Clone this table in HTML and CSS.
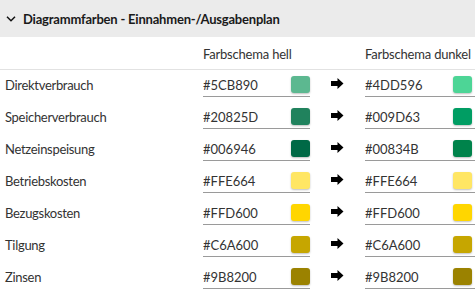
FILE: index.html
```html
<!DOCTYPE html>
<html lang="de">
<head>
<meta charset="utf-8">
<title>Diagrammfarben</title>
<link rel="stylesheet" href="styles.css">
</head>
<body>
<section class="panel">
  <header class="panel-head">
    <svg class="chev" width="10" height="6" viewBox="0 0 10 6"><path d="M1 0.8 L5 4.8 L9 0.8" fill="none" stroke="#111" stroke-width="1.5"/></svg>
    <span class="title">Diagrammfarben - Einnahmen-/Ausgabenplan</span>
  </header>
  <div class="grid">
    <div class="colhead"></div>
    <div class="colhead">Farbschema hell</div>
    <div class="colhead"></div>
    <div class="colhead">Farbschema dunkel</div>

    <div class="label">Direktverbrauch</div>
    <div class="field"><span class="hex">#5CB890</span><span class="sw" style="background:#5CB890"></span></div>
    <div class="arrow"><svg width="13" height="11" viewBox="0 0 13 11"><path d="M0 3 H6.5 V0 L12.5 5.5 L6.5 11 V8 H0 Z" fill="#000"/></svg></div>
    <div class="field dark"><span class="hex">#4DD596</span><span class="sw" style="background:#4DD596"></span></div>

    <div class="label">Speicherverbrauch</div>
    <div class="field"><span class="hex">#20825D</span><span class="sw" style="background:#20825D"></span></div>
    <div class="arrow"><svg width="13" height="11" viewBox="0 0 13 11"><path d="M0 3 H6.5 V0 L12.5 5.5 L6.5 11 V8 H0 Z" fill="#000"/></svg></div>
    <div class="field dark"><span class="hex">#009D63</span><span class="sw" style="background:#009D63"></span></div>

    <div class="label">Netzeinspeisung</div>
    <div class="field"><span class="hex">#006946</span><span class="sw" style="background:#006946"></span></div>
    <div class="arrow"><svg width="13" height="11" viewBox="0 0 13 11"><path d="M0 3 H6.5 V0 L12.5 5.5 L6.5 11 V8 H0 Z" fill="#000"/></svg></div>
    <div class="field dark"><span class="hex">#00834B</span><span class="sw" style="background:#00834B"></span></div>

    <div class="label">Betriebskosten</div>
    <div class="field"><span class="hex">#FFE664</span><span class="sw" style="background:#FFE664"></span></div>
    <div class="arrow"><svg width="13" height="11" viewBox="0 0 13 11"><path d="M0 3 H6.5 V0 L12.5 5.5 L6.5 11 V8 H0 Z" fill="#000"/></svg></div>
    <div class="field dark"><span class="hex">#FFE664</span><span class="sw" style="background:#FFE664"></span></div>

    <div class="label">Bezugskosten</div>
    <div class="field"><span class="hex">#FFD600</span><span class="sw" style="background:#FFD600"></span></div>
    <div class="arrow"><svg width="13" height="11" viewBox="0 0 13 11"><path d="M0 3 H6.5 V0 L12.5 5.5 L6.5 11 V8 H0 Z" fill="#000"/></svg></div>
    <div class="field dark"><span class="hex">#FFD600</span><span class="sw" style="background:#FFD600"></span></div>

    <div class="label">Tilgung</div>
    <div class="field"><span class="hex">#C6A600</span><span class="sw" style="background:#C6A600"></span></div>
    <div class="arrow"><svg width="13" height="11" viewBox="0 0 13 11"><path d="M0 3 H6.5 V0 L12.5 5.5 L6.5 11 V8 H0 Z" fill="#000"/></svg></div>
    <div class="field dark"><span class="hex">#C6A600</span><span class="sw" style="background:#C6A600"></span></div>

    <div class="label">Zinsen</div>
    <div class="field"><span class="hex">#9B8200</span><span class="sw" style="background:#9B8200"></span></div>
    <div class="arrow"><svg width="13" height="11" viewBox="0 0 13 11"><path d="M0 3 H6.5 V0 L12.5 5.5 L6.5 11 V8 H0 Z" fill="#000"/></svg></div>
    <div class="field dark"><span class="hex">#9B8200</span><span class="sw" style="background:#9B8200"></span></div>
  </div>
</section>
</body>
</html>
```
FILE: styles.css
```css
html, body {
  margin: 0;
  padding: 0;
  background: #fff;
  overflow: hidden;
}
body {
  font-family: Lato, "Noto Sans", sans-serif;
  color: #222;
  width: 475px;
}
.panel-head {
  height: 37px;
  background: #ebebeb;
  display: flex;
  align-items: center;
  box-sizing: border-box;
  padding-left: 6px;
}
.chev {
  margin-right: 7px;
  margin-top: 1px;
}
.title {
  font-size: 13px;
  font-weight: 700;
  letter-spacing: -0.2px;
  color: #1a1a1a;
  padding-top: 1px;
}
.grid {
  display: grid;
  grid-template-columns: 203px 107px 55px 110px;
  grid-auto-rows: 28px;
  row-gap: 4px;
}
.colhead {
  height: 33px;
  border-bottom: 1px solid #e2e2e2;
  box-sizing: border-box;
  font-size: 13px;
  color: #333;
  padding-top: 9px;
  margin-bottom: -4px;
  letter-spacing: -0.2px;
}
.label {
  font-size: 13px;
  color: #333;
  padding-left: 5px;
  display: flex;
  align-items: center;
  padding-top: 4px;
  letter-spacing: -0.3px;
}
.field {
  display: flex;
  align-items: center;
  justify-content: space-between;
  border-bottom: 1px solid #9a9a9a;
  box-sizing: border-box;
  padding-top: 2px;
}
.field.dark {
  padding-right: 3px;
}
.hex {
  font-size: 13px;
  color: #333;
  margin-top: 2px;
}
.sw {
  width: 19px;
  height: 17px;
  border-radius: 3px;
  box-shadow: 0 1px 2px rgba(0,0,0,0.25);
  margin-top: 1px;
}
.arrow {
  display: flex;
  align-items: center;
  padding-left: 21px;
  padding-top: 1px;
}
```
